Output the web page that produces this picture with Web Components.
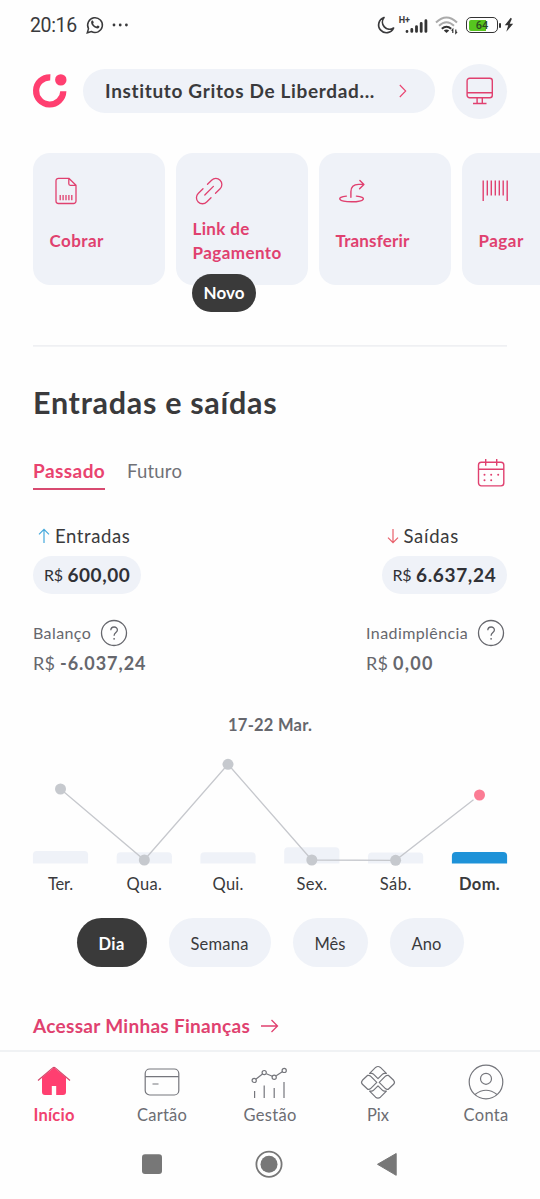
<!DOCTYPE html>
<html lang="pt-BR">
<head>
<meta charset="utf-8">
<title>Entradas e saídas</title>
<style>
html,body{margin:0;padding:0;background:#fefefe}
body{width:540px;height:1199px;overflow:hidden;font-family:Lato,"Noto Sans",sans-serif;color:#3a3a3c}
</style>
</head>
<body>
<finance-app></finance-app>
<script>
const pink='#e0406f';
const ICONS={
whatsapp:[18,18,'<path d="M1.3 16.8l1.2-4.2a7.4 7.4 0 1 1 2.8 2.9z" fill="none" stroke="#3a3a3c" stroke-width="1.5"/><path d="M5.6 4.8c1-.8 1.5-.3 2.1 1.5.2.7-.8 1-.5 1.5.7 1.4 1.7 2.2 3.1 2.7.6.2.9-1.2 1.6-.9 1.7.7 1.9 1 1.3 1.9-1 1.5-3 1.1-5-.2C5.9 9.700 4.300 7 5.600 4.800z" fill="#3a3a3c"/>'],
dots:[18,6,'<g fill="#3a3a3c"><circle cx="2" cy="3" r="1.4"/><circle cx="8.200" cy="3" r="1.4"/><circle cx="14.400" cy="3" r="1.4"/></g>'],
moon:[18,18,'<path d="M7 1.500A7.800 7.800 0 1 0 16.600 12 7.200 7.200 0 0 1 7 1.500z" fill="none" stroke="#3a3a3c" stroke-width="1.700" stroke-linejoin="round"/>'],
bars:[23,14,'<g stroke="#333" stroke-width="2.800" stroke-linecap="round"><path d="M2 12.400v.1M6.800 10.400v2M11.500 7.600v4.800M16.200 4.300v8.100M20.900 1.700v10.700"/></g>'],
wifi:[24,18,'<g fill="none" stroke-width="2"><path d="M1 6.500q10.500-10 21 0" stroke="#aaa"/><path d="M4 9.800q7.500-7 15 0" stroke="#aaa"/><path d="M6.800 12.800q4.700-4.200 9.400 0" stroke="#333"/></g><path d="M8.800 14.500q2.700-1.800 5.400 0l-2.700 2.600z" fill="#333"/><path d="M17.800 17v-3.700l-1.200 1.300M20.800 13.500v3.700l1.300-1.300" fill="none" stroke="#333" stroke-width="1.200"/>'],
bolt:[10,16,'<path d="M6.700.8L.8 8.300h3.400L2.300 14.800 9.200 6.800H5.700l2.200-5z" fill="#333"/>'],
logo:[36,36,'<path d="M17.300 4.300A13.600 13.600 0 1 0 30.300 18.200" fill="none" stroke="#ff3f70" stroke-width="6.200"/><circle cx="27.800" cy="6.900" r="5.700" fill="#ff3f70"/>'],
chev:[10,14,`<path d="M1.800 1l5.900 6-5.900 6" fill="none" stroke="#e9436f" stroke-width="1.100"/>`],
monitor:[28,28,`<g transform="translate(-.5 0)" fill="none" stroke="${pink}" stroke-width="1.400"><rect x="1.600" y="1.300" width="25.200" height="19.400" rx="2.500"/><path d="M1.600 15.700h25.200M11.600 20.700v5.500M16.800 20.700v5.500M7.500 26.500h13.500"/></g>`],
doc:[28,28,`<g transform="translate(3 0)" fill="none" stroke="${pink}" stroke-width="1.300" stroke-linejoin="round"><path d="M3.500 1.300h10.300l7.200 7V24a2.500 2.500 0 0 1-2.500 2.500h-15A2.500 2.500 0 0 1 1 24V3.800a2.500 2.500 0 0 1 2.500-2.500zM13.800 1.300v5.500q0 1.500 1.500 1.500H21"/><path d="M5.200 18v5.200M8.100 18v5.200M11 18v5.200M13.900 18v5.200M16.800 18v5.200"/></g>`],
link:[28,28,`<g fill="none" stroke="${pink}" stroke-width="1.300" stroke-linecap="round"><path d="M12.500 7.300l4.100-4.100a6 6 0 0 1 8.500 8.500l-4.600 4.600"/><path d="M8 11.700l-4.800 4.800a6 6 0 0 0 8.500 8.500l4.300-4.300M9.800 18l8.600-8.600"/></g>`],
transfer:[28,26,`<g transform="translate(-.4 .8)" fill="none" stroke="${pink}" stroke-width="1.400" stroke-linecap="round" stroke-linejoin="round"><path d="M13.300 18.500V13Q13.300 5.600 21 5.600h5M22.300 1.600l4 4-4.300 4.300M8.800 17.300C-1.500 18.300.2 23 14 23s15.500-4.700 4.800-5.700"/></g>`],
barcode:[28,26,`<path transform="translate(.5 .6)" d="M1.700 2v20.500M5.800 2v14.800M9.800 2v14.800M13.800 2v14.800M17.800 2v14.800M21.700 2v14.800M25.700 2v20.500" fill="none" stroke="${pink}" stroke-width="1.400"/>`],
calendar:[28,30,`<g fill="none" stroke="${pink}" stroke-width="1.400"><rect x="1.500" y="4.300" width="25.300" height="23.600" rx="2.800"/><path d="M1.500 11.300h25.300M8.700 1v6.700M19.700 1v6.700"/></g><g fill="${pink}"><circle cx="7.500" cy="16.800" r="1"/><circle cx="14.200" cy="16.800" r="1"/><circle cx="21.200" cy="16.800" r="1"/><circle cx="7.500" cy="22.200" r="1"/><circle cx="14.200" cy="22.200" r="1"/></g>`],
up:[12,16,'<path d="M6 15V1.500M1 6.300l5-5 5 5" fill="none" stroke="#45a9dc" stroke-width="1.200"/>'],
down:[12,16,'<path d="M6 1v13.500M1 9.700l5 5 5-5" fill="none" stroke="#e85f6a" stroke-width="1.200"/>'],
help:[28,28,'<circle cx="14" cy="14" r="12.500" fill="none" stroke="#66676d" stroke-width="1.300"/><path d="M10.800 11.200c.1-4.200 6.600-4.200 6.600-.3 0 2.700-3.300 2.700-3.300 5.900" fill="none" stroke="#66676d" stroke-width="1.300"/><circle cx="14.100" cy="19.800" r=".9" fill="#66676d"/>'],
arrow:[20,16,`<path d="M1 8h16.500M11.500 2l6 6-6 6" fill="none" stroke="${pink}" stroke-width="1.300"/>`],
home:[36,36,'<path d="M6 13.500L18 3.500l12 10V28a3 3 0 0 1-3 3h-6.800v-9h-4.400v9H9a3 3 0 0 1-3-3z" fill="#ff3f70"/><path d="M2 16.500L16.700 3.900q1.300-1 2.600 0L34 16.500" fill="none" stroke="#d4476b" stroke-width="1.200"/>'],
card:[36,36,'<g fill="none" stroke="#75767c" stroke-width="1.200"><rect x="1.200" y="5" width="33.600" height="26" rx="4.500"/><path d="M1.200 12.700h33.600M8.500 20h6"/></g>'],
chart:[36,36,'<g transform="translate(-.6 .4)" fill="none" stroke="#75767c" stroke-width="1.200"><circle cx="2.800" cy="16" r="2.100"/><circle cx="12.800" cy="8.200" r="2.100"/><circle cx="22.800" cy="12.800" r="2.100"/><circle cx="32.800" cy="6" r="2.100"/><path d="M4.700 14.600l6.400-5M15 9.300l5.900 2.500M24.800 11.400l6.100-4M3.200 26.500v7M12.800 21v12.500M22.800 23.500v10M32.600 17.500v16"/></g>'],
pix:[36,36,'<g fill="none" stroke="#75767c" stroke-width="1.200" stroke-linejoin="round"><path d="M9.600 9.400l6-6q2.400-1.800 4.800 0l6 6h-1.800q-1.300 0-2.300 1L18 14.700l-4.300-4.300q-1-1-2.300-1z"/><path d="M9.600 27.200l6 6q2.400 1.800 4.800 0l6-6h-1.800q-1.300 0-2.300-1L18 21.900l-4.300 4.300q-1 1-2.300 1z"/><path d="M16.800 18.300l-6 6q-1 1-2.300 1H7.700l-5.300-5q-1.800-2 0-4l5.300-5h.8q1.300 0 2.300 1zM19.200 18.300l6 6q1 1 2.300 1h.8l5.300-5q1.800-2 0-4l-5.300-5h-.8q-1.300 0-2.300 1z"/></g>'],
user:[36,36,'<g fill="none" stroke="#75767c" stroke-width="1.200"><circle cx="18" cy="18" r="16.800"/><circle cx="18" cy="14.800" r="5.500"/><path d="M7 30.500q11-8.500 22 0"/></g>'],
square:[28,28,'<rect x="4" y="4.300" width="20" height="19.700" rx="3" fill="#777"/>'],
circle:[28,28,'<circle cx="14" cy="14.200" r="12.600" fill="none" stroke="#777" stroke-width="1.800"/><circle cx="14" cy="14.200" r="8.500" fill="#777"/>'],
triangle:[28,28,'<path d="M4.500 14.300L23.200 3.500v21.800z" fill="#777" stroke="#777" stroke-linejoin="round"/>']
};
customElements.define('ui-icon',class extends HTMLElement{
 connectedCallback(){const [w,h,s]=ICONS[this.getAttribute('name')];
 this.attachShadow({mode:'open'}).innerHTML=`<style>:host{display:block;flex:none;width:${w}px;height:${h}px}svg{display:block;overflow:visible}</style><svg width="${w}" height="${h}" viewBox="0 0 ${w} ${h}">${s}</svg>`}
});
/* A single line of text whose tracking is set so that it fills the width in its "w" attribute. */
customElements.define('ui-text',class extends HTMLElement{
 connectedCallback(){
 const a=n=>this.getAttribute(n);
 this.attachShadow({mode:'open'}).innerHTML=`<style>:host{display:block;flex:none;width:${a('w')}px;font-size:${a('size')||16}px;font-weight:${a('weight')||400};line-height:24px;white-space:nowrap;${a('color')?'color:'+a('color'):''}}span{display:inline-block}</style><span><slot></slot></span>`;
 const s=this.shadowRoot.querySelector('span'),n=this.textContent.length;
 s.style.letterSpacing=((+a('w')-s.getBoundingClientRect().width)/(n-.5)).toFixed(3)+'px';
 }
});
customElements.define('status-bar',class extends HTMLElement{
 connectedCallback(){this.attachShadow({mode:'open'}).innerHTML=`<style>:host{display:flex;align-items:center;height:50px;padding:0 26px 0 30px;box-sizing:border-box;font-family:Roboto,sans-serif}
 .time{padding-top:2px}.sp{flex:1}.net{display:flex;align-items:flex-start;height:18px;margin:0 7px 0 4px}.net ui-icon{margin:3px 0 0 -5px}.net b{font-size:9px;line-height:9px}
 .bat{width:32px;height:16px;box-sizing:border-box;border:1.500px solid #333;border-radius:5px;padding:1.500px;margin-left:7px}.fill{height:100%;border-radius:2px;background:linear-gradient(90deg,#56c51f 64%,#fff 64%);font:500 11px/11px Roboto,sans-serif;text-align:center;color:#2c4b20}.nub{width:2px;height:5px;background:#333;border-radius:1px;margin:0 3px 0 1px}</style>
 <div class="time"><ui-text w="47" size="19.500">20:16</ui-text></div><ui-icon name="whatsapp" style="margin-left:9px"></ui-icon><ui-icon name="dots" style="margin-left:8px"></ui-icon><div class="sp"></div>
 <ui-icon name="moon"></ui-icon><div class="net"><b>H+</b><ui-icon name="bars"></ui-icon></div><ui-icon name="wifi"></ui-icon><div class="bat"><div class="fill">64</div></div><div class="nub"></div><ui-icon name="bolt"></ui-icon>`}
});
customElements.define('account-header',class extends HTMLElement{
 connectedCallback(){this.attachShadow({mode:'open'}).innerHTML=`<style>:host{display:flex;align-items:center;height:82px;padding:0 33px 1px 33px}
 .pill{display:flex;align-items:center;width:352px;height:44px;border-radius:22px;background:#eff2f8;margin:0 17px 0 14px;box-sizing:border-box;padding-left:22px}.pill ui-icon{margin-left:23px}
 .mon{width:55px;height:55px;border-radius:50%;background:#eff2f8;display:grid;place-items:center}</style>
 <ui-icon name="logo"></ui-icon><div class="pill"><ui-text w="270" size="19" weight="700">Instituto Gritos De Liberdad...</ui-text><ui-icon name="chev"></ui-icon></div><div class="mon"><ui-icon name="monitor"></ui-icon></div>`}
});
customElements.define('action-card',class extends HTMLElement{
 connectedCallback(){this.attachShadow({mode:'open'}).innerHTML=`<style>:host{position:relative;display:flex;flex-direction:column;flex:none;width:132px;height:132px;box-sizing:border-box;border-radius:17px;background:#eff2f8;padding:24px 0 0 16.500px}
 .ic{display:flex;align-items:center;height:28px;padding-left:2.500px}.tx{height:48px;margin-top:12px;display:flex;flex-direction:column;justify-content:center}
 ::slotted([slot=badge]){position:absolute;left:16px;top:121px}</style>
 <div class="ic"><ui-icon name="${this.getAttribute('icon')}"></ui-icon></div><div class="tx"><slot></slot></div><slot name="badge"></slot>`}
});
customElements.define('dark-badge',class extends HTMLElement{
 connectedCallback(){this.attachShadow({mode:'open'}).innerHTML=`<style>:host{display:flex;align-items:center;justify-content:center;width:64px;height:38px;border-radius:19px;background:#3a3a3a;color:#fff}</style><slot></slot>`}
});
customElements.define('money-pill',class extends HTMLElement{
 connectedCallback(){this.attachShadow({mode:'open'}).innerHTML=`<style>:host{display:flex;align-items:center;height:38px;border-radius:19px;background:#eff2f8;box-sizing:border-box;padding:0 11px;gap:4.500px;color:#303136;width:max-content}</style><slot></slot>`}
});
customElements.define('flow-chart',class extends HTMLElement{
 connectedCallback(){
 const x=[60.5,144.3,228,311.800,395.6,479.5],y=[789,860,764.3,860,860.3,795],top=[851,852.3,852.3,847.300,852.5,852];
 const bar=(c,t,i)=>`<path d="M${c-27.600} 863.500V${t+4}q0-4 4-4h47.200q4 0 4 4V863.500z" fill="${i==5?'#1e92d8':'#eff2f8'}"/>`;
 const L=[['Ter.',25],['Qua.',35.500],['Qui.',31],['Sex.',31],['Sáb.',32],['Dom.',41]];
 this.attachShadow({mode:'open'}).innerHTML=`<style>:host{display:block}svg{display:block}.l{display:flex;justify-content:space-between;padding:0 33px}.l div{width:55px;display:flex;justify-content:center}</style>
 <svg width="540" height="138" viewBox="0 734 540 138">${x.map((c,i)=>bar(c,top[i],i)).join('')}<path d="M60.500 789L144.300 860 228 764.300 311.800 860 395.600 860.300 473.500 799.800" fill="none" stroke="#c6c8cd" stroke-width="1.300"/>${x.map((c,i)=>`<circle cx="${c}" cy="${y[i]}" r="5.500" fill="${i==5?'#fb7c94':'#c6c9ce'}"/>`).join('')}</svg>
 <div class="l">${L.map(([t,w],i)=>`<div><ui-text w="${w}" size="16.500" weight="${i==5?700:400}">${t}</ui-text></div>`).join('')}</div>`}
});
customElements.define('period-chip',class extends HTMLElement{
 connectedCallback(){const on=this.hasAttribute('selected');this.attachShadow({mode:'open'}).innerHTML=`<style>:host{display:flex;align-items:center;justify-content:center;height:49px;border-radius:24.500px;padding:2px 22px 0;box-sizing:border-box;background:${on?'#3a3a3a':'#eff2f8'};color:${on?'#fff':'#3a3a3c'}}</style><slot></slot>`}
});
customElements.define('nav-item',class extends HTMLElement{
 connectedCallback(){const on=this.hasAttribute('selected');this.attachShadow({mode:'open'}).innerHTML=`<style>:host{display:flex;flex-direction:column;align-items:center;gap:3px;flex:1;color:${on?'#f0426f':'#6c6d73'}}</style><ui-icon name="${this.getAttribute('icon')}"></ui-icon><slot></slot>`}
});
customElements.define('finance-app',class extends HTMLElement{
 connectedCallback(){this.attachShadow({mode:'open'}).innerHTML=`<style>
 :host{display:block;width:540px;height:1199px;overflow:hidden}
 .row{display:flex;align-items:center}
 .cards{display:flex;gap:11px;margin:20px 0 0 33px;height:132px;color:#e0416f}
 .hr{height:1px;background:#eff0f3;margin:60px 33px 0;border-bottom:1px solid #f3f4f6}
 main{padding:0 33px}
 .title{height:40px;margin-top:35px}
 .tabs{display:flex;margin-top:33px;height:35px}
 .tab{box-sizing:border-box;height:35px;padding-top:4px}.on{border-bottom:2px solid #d84a70;color:#e9436f;margin-right:22px}
 .tabs ui-icon{margin:3px 2px 0 auto}
 .cols{display:flex;justify-content:space-between;margin-top:34px}
 .lab{height:24px;margin-bottom:8px;gap:5px;padding-left:5px}
 .two{display:flex;justify-content:space-between;margin-top:26px;color:#66676d}
 .two .row{height:26px}.two .row+.row{margin-top:4px}
 .date{display:flex;justify-content:center;align-items:center;height:20px;margin-top:38px;padding-top:1px;margin-bottom:-1px;color:#66676d}
 .chips{display:flex;gap:22px;padding-left:76.500px;margin-top:22px}
 .more{height:30px;margin-top:44px;padding-left:33px;gap:10px;color:#e0416f}
 nav{display:flex;border-top:2px solid #f0f2f4;margin-top:9px;padding-top:12px;height:65px}
 .sys{display:flex;justify-content:center;gap:89.500px;align-items:center;height:70px;padding-right:2px}
 </style>
 <status-bar></status-bar><account-header></account-header>
 <div class="cards">
 <action-card icon="doc"><ui-text w="54" size="17" weight="700">Cobrar</ui-text></action-card>
 <action-card icon="link"><ui-text w="57" size="17" weight="700">Link de</ui-text><ui-text w="89" size="17" weight="700">Pagamento</ui-text><dark-badge slot="badge"><ui-text w="41" size="17" weight="700">Novo</ui-text></dark-badge></action-card>
 <action-card icon="transfer"><ui-text w="74" size="17" weight="700">Transferir</ui-text></action-card>
 <action-card icon="barcode"><ui-text w="45" size="17" weight="700">Pagar</ui-text></action-card>
 </div>
 <div class="hr"></div>
 <main>
 <div class="row title"><ui-text w="244" size="30.500" weight="700">Entradas e saídas</ui-text></div>
 <div class="tabs"><div class="tab on"><ui-text w="72" size="19" weight="700">Passado</ui-text></div><div class="tab"><ui-text w="55" size="18.500" color="#707177">Futuro</ui-text></div><ui-icon name="calendar"></ui-icon></div>
 <div class="cols">
 <div><div class="row lab"><ui-icon name="up"></ui-icon><ui-text w="75" size="18.500">Entradas</ui-text></div><money-pill><ui-text w="19" size="16">R$</ui-text><ui-text w="62.500" size="19" weight="700">600,00</ui-text></money-pill></div>
 <div><div class="row lab"><ui-icon name="down"></ui-icon><ui-text w="55" size="18.500">Saídas</ui-text></div><money-pill><ui-text w="19" size="16">R$</ui-text><ui-text w="80" size="19" weight="700">6.637,24</ui-text></money-pill></div>
 </div>
 <div class="two">
 <div><div class="row"><ui-text w="58" size="16">Balanço</ui-text><ui-icon name="help" style="margin-left:8.500px"></ui-icon></div><div class="row"><ui-text w="22" size="18">R$</ui-text><ui-text w="86" size="18" weight="700" style="margin-left:5px">-6.037,24</ui-text></div></div>
 <div style="width:141px"><div class="row"><ui-text w="102" size="16">Inadimplência</ui-text><ui-icon name="help" style="margin-left:8.500px"></ui-icon></div><div class="row"><ui-text w="22" size="18">R$</ui-text><ui-text w="40" size="18" weight="700" style="margin-left:5px">0,00</ui-text></div></div>
 </div>
 <div class="date"><ui-text w="84" size="16.500" weight="700">17-22 Mar.</ui-text></div>
 </main>
 <flow-chart></flow-chart>
 <div class="chips"><period-chip selected><ui-text w="26" size="16.500" weight="700">Dia</ui-text></period-chip><period-chip><ui-text w="58" size="16.500">Semana</ui-text></period-chip><period-chip><ui-text w="31" size="16.500">Mês</ui-text></period-chip><period-chip><ui-text w="30" size="16.500">Ano</ui-text></period-chip></div>
 <div class="row more"><ui-text w="217" size="19" weight="700">Acessar Minhas Finanças</ui-text><ui-icon name="arrow"></ui-icon></div>
 <nav><nav-item icon="home" selected><ui-text w="41" size="16.500" weight="700">Início</ui-text></nav-item><nav-item icon="card"><ui-text w="50" size="16.500">Cartão</ui-text></nav-item><nav-item icon="chart"><ui-text w="53" size="16.500">Gestão</ui-text></nav-item><nav-item icon="pix"><ui-text w="22" size="16.500">Pix</ui-text></nav-item><nav-item icon="user"><ui-text w="45" size="16.500">Conta</ui-text></nav-item></nav>
 <div class="sys"><ui-icon name="square"></ui-icon><ui-icon name="circle"></ui-icon><ui-icon name="triangle"></ui-icon></div>`}
});
</script>
</body>
</html>
